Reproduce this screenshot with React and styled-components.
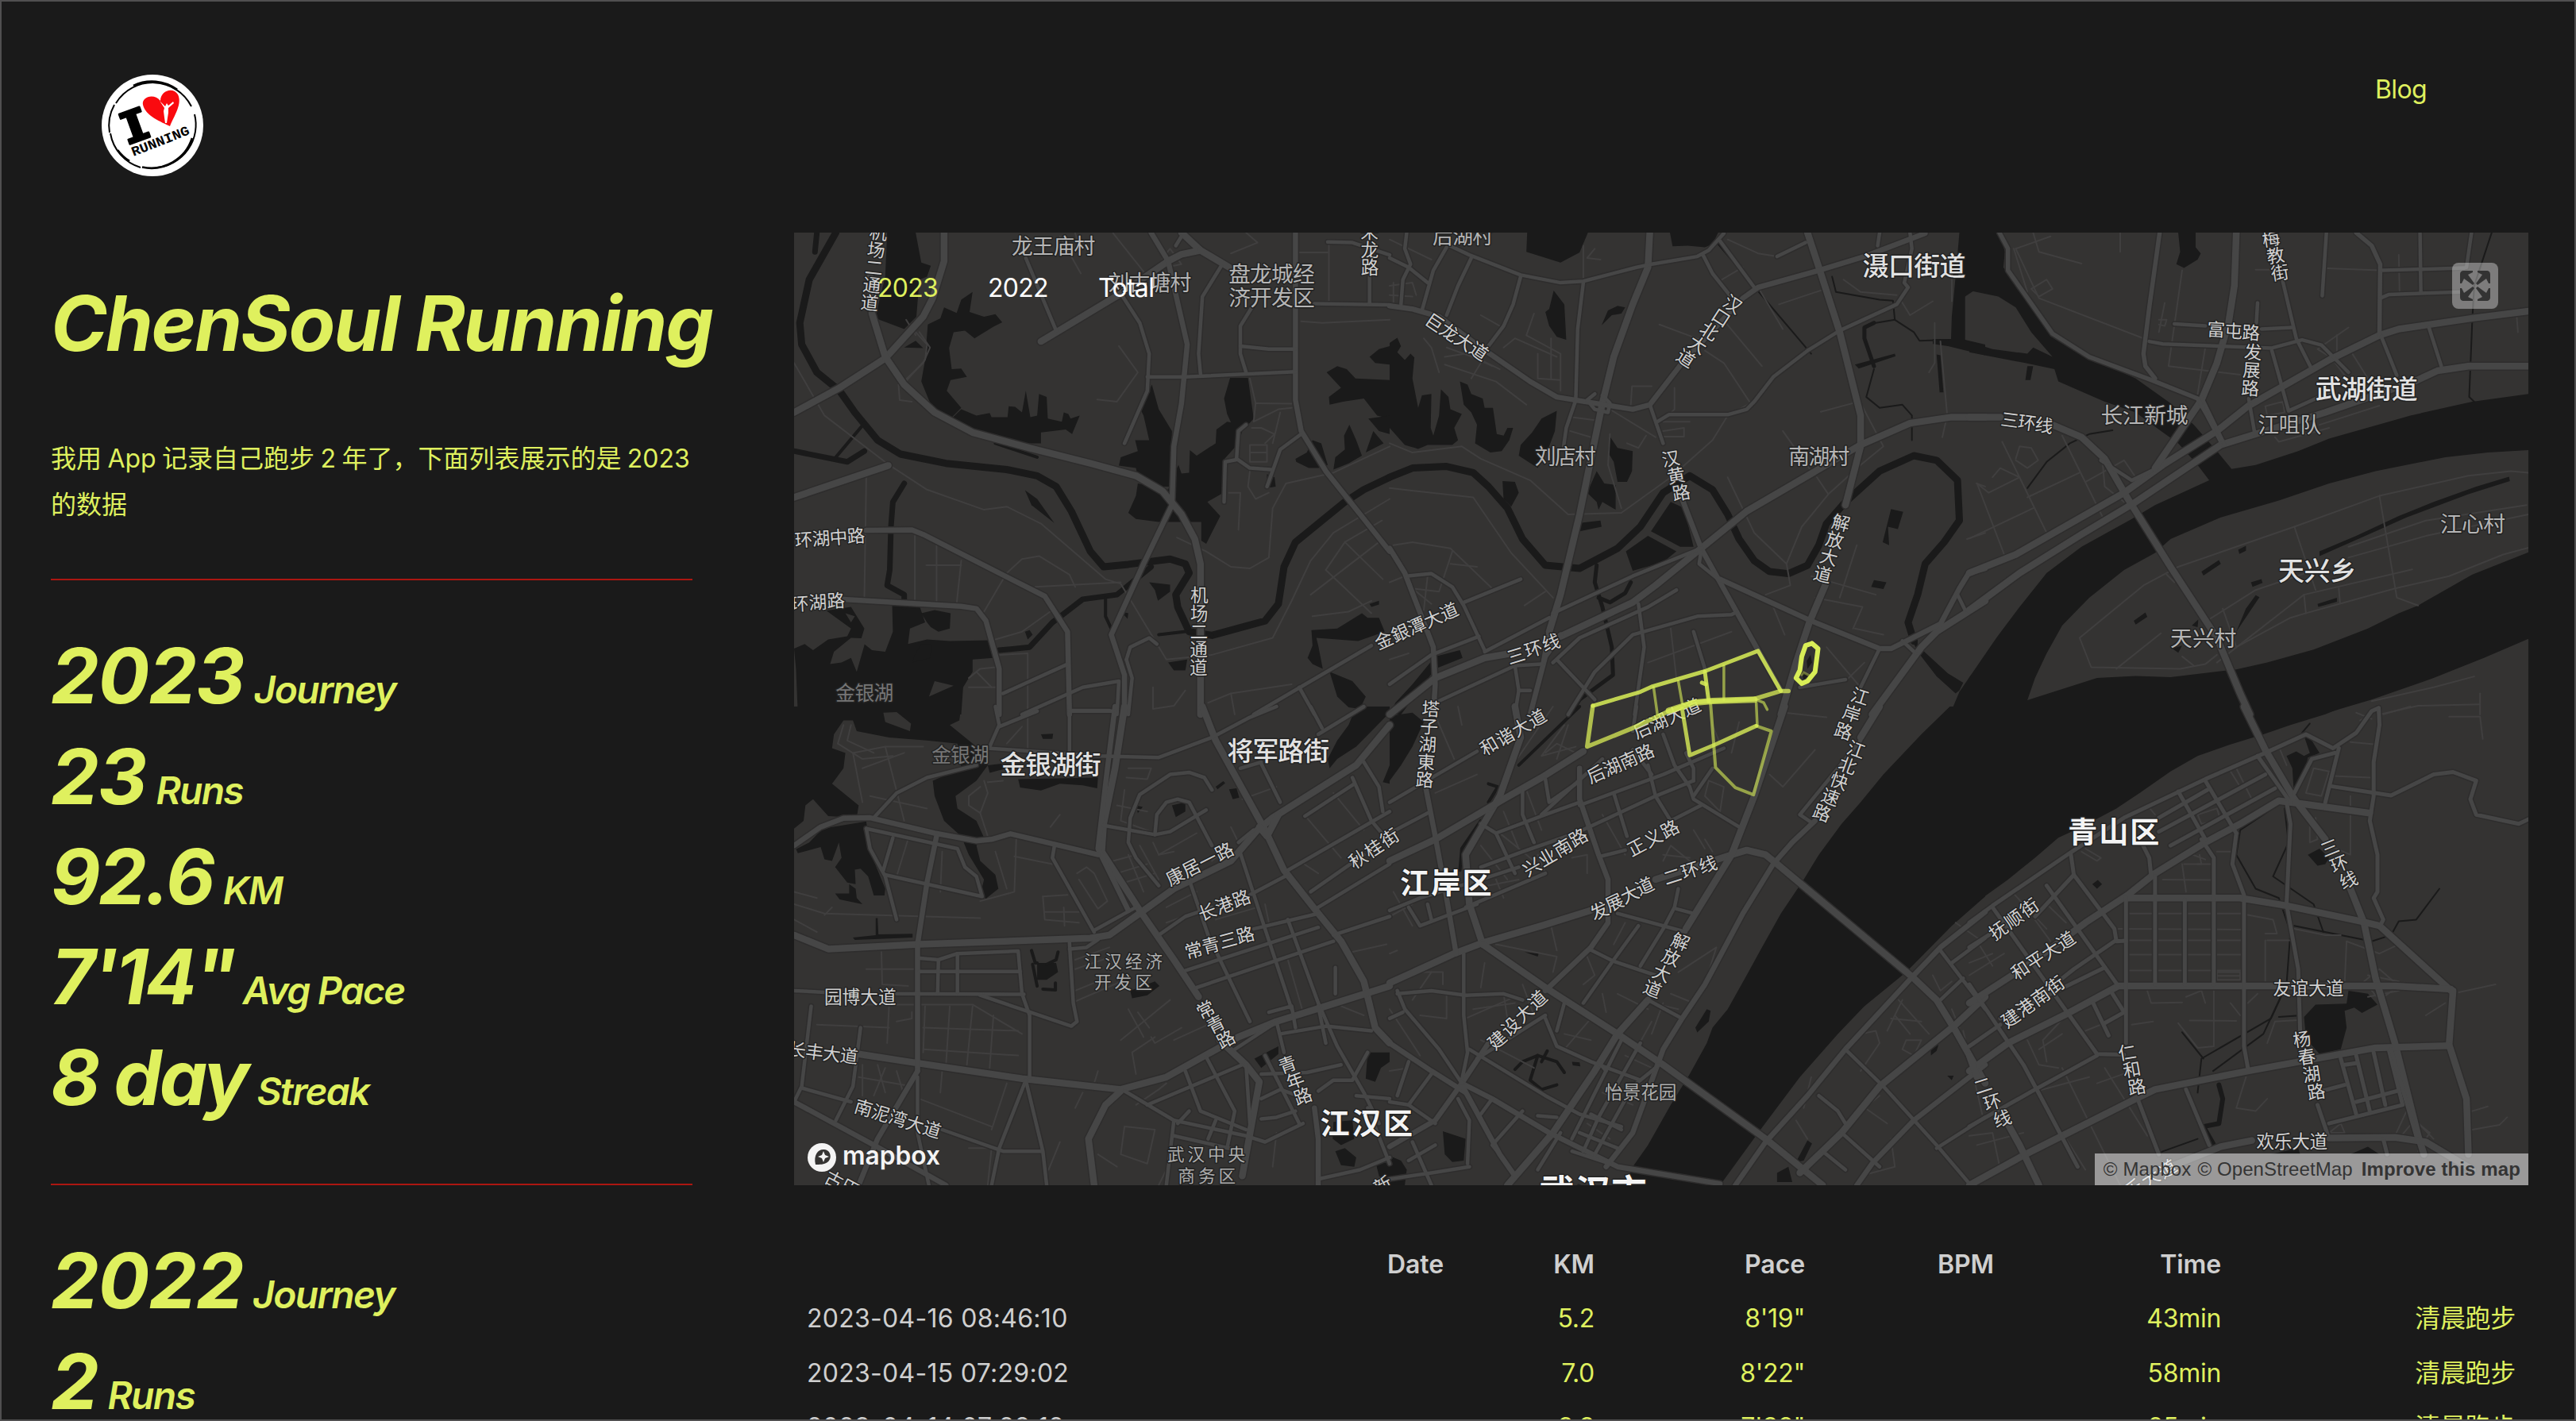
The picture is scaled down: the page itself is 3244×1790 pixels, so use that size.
import React from "react";
import styled, { createGlobalStyle } from "styled-components";

const lime = "#dff05e";
const ink = "#1a1a1a";
const sans = `Inter, "Noto Sans CJK SC", sans-serif`;

const Global = createGlobalStyle`
  * { box-sizing: border-box; }
  body { margin: 0; background: ${ink}; }
`;

const Window = styled.div`
  width: 3244px;
  height: 1790px;
  overflow: hidden;
  border: 2px solid #504f50;
  background: ${ink};
  color: ${lime};
  font-family: ${sans};
  font-size: 32px;
`;

const Header = styled.header`
  display: flex;
  justify-content: space-between;
  align-items: flex-start;
  height: 291px;
  padding: 92px 186px 0 126px;
`;

const BlogLink = styled.a`
  margin-top: -1px;
  line-height: 40px;
  letter-spacing: -0.6px;
  color: ${lime};
`;

const Main = styled.main`
  display: grid;
  grid-template-columns: 936px 2184px;
  padding-left: 62px;
`;

const Sidebar = styled.aside`
  width: 808px;
  padding-top: 66px;
`;

const Title = styled.h1`
  margin: 0 0 94px;
  font-size: 96px;
  line-height: 96px;
  font-weight: 700;
  font-style: italic;
  letter-spacing: -0.0218em;
  white-space: nowrap;
`;

const Intro = styled.p`
  margin: 0;
  line-height: 57.6px;
  word-spacing: -1.6px;
  white-space: nowrap;
`;

const Rule = styled.hr`
  height: 2px;
  margin: ${(p) => p.$top}px 0 57px;
  border: 0;
  background: #ac1611;
`;

const Stat = styled.div`
  display: flex;
  align-items: baseline;
  height: 126.4px;
  line-height: 126.4px;
  font-style: italic;
  white-space: pre;
`;

const StatValue = styled.span`
  font-size: 96px;
  font-weight: 700;
  letter-spacing: ${(p) => p.$tracking}px;
`;

const StatName = styled.span`
  margin-left: 12px;
  font-size: 48px;
  font-weight: 600;
  letter-spacing: -0.036em;
`;

const Content = styled.section`
  display: flex;
  flex-direction: column;
`;

const MapFrame = styled.div`
  position: relative;
  width: 2184px;
  height: 1200px;
  overflow: hidden;
  background: #343332;

  > svg { display: block; }
`;

const YearNav = styled.nav`
  position: absolute;
  left: 105px;
  top: 50px;
  display: flex;
  gap: 62px;
  line-height: 40px;
  letter-spacing: -0.7px;
`;

const Year = styled.a`
  width: 77px;
  color: ${(p) => (p.$active ? lime : "#fff")};
`;

const FullscreenButton = styled.button`
  position: absolute;
  right: 38px;
  top: 38px;
  display: grid;
  place-items: center;
  width: 58px;
  height: 58px;
  padding: 0;
  border: 0;
  border-radius: 8px;
  background: rgba(255, 255, 255, 0.36);
`;

const MapboxLogo = styled.div`
  position: absolute;
  left: 17px;
  bottom: 13px;
  display: flex;
`;

const Attribution = styled.div`
  position: absolute;
  right: 0;
  bottom: 0;
  display: flex;
  gap: 8px;
  height: 40px;
  padding: 0 10px 0 11px;
  background: rgba(255, 255, 255, 0.5);
  color: #343434;
  font: 24px/40px "Liberation Sans", Arial, sans-serif;
  letter-spacing: 0.1px;
  white-space: nowrap;

  b { margin-left: 3px; }
`;

const Table = styled.div`
  padding-top: 66px;
`;

const Row = styled.div`
  display: grid;
  grid-template-columns: 834px 190px 265px 238px 286px 371px;
  height: 68.3px;
  line-height: 68.3px;
`;

const Cell = styled.span`
  padding: 0 16px;
  text-align: ${(p) => (p.$left ? "left" : "right")};
  color: ${(p) => (p.$muted ? "#cfcfcf" : lime)};
  font-weight: ${(p) => (p.$head ? 600 : 400)};
  letter-spacing: ${(p) => (p.$left ? 0.28 : p.$head ? -0.1 : -0.3)}px;
`;

/* ---------- map ---------- */

// Each sheet covers one sixth of the map and has its own 1568-unit grid.
const sheets = {
  A: { x: 1000, y: 290, sx: 0.47832, sy: 0.38903 },
  B: { x: 1750, y: 290, sx: 0.47832, sy: 0.38903 },
  C: { x: 2480, y: 290, sx: 0.48724, sy: 0.38903 },
  D: { x: 1000, y: 890, sx: 0.47832, sy: 0.38903 },
  E: { x: 1750, y: 890, sx: 0.47832, sy: 0.38903 },
  F: { x: 2480, y: 890, sx: 0.48724, sy: 0.38903 },
};

const place = (sheet, x, y) => {
  const s = sheets[sheet];
  return [s.x + x * s.sx, s.y + y * s.sy];
};

const project = (sheet, line) =>
  line
    .trim()
    .split(" ")
    .map((p) => {
      const [x, y] = p.split(",").map(Number);
      return place(sheet, x, y).map((n) => n.toFixed(1)).join(",");
    })
    .join(" ");

const lines = (text) => text.split("|").map((l) => l.trim()).filter(Boolean);

const water = {
  A: `245,8 320,8 335,105 360,115 350,150 330,160 322,280 290,320 215,285 222,240 240,150
|395,250 428,268 440,225 470,200 462,265 500,280 530,272 548,298 525,312 475,350 450,325 420,330 408,382 415,450 440,448 455,475 412,485 402,520 440,575 412,610 360,565 345,520 335,490 345,420 352,305 385,285
|440,580 480,600 515,592 520,605 562,605 565,570 582,572 600,590 610,520 622,605 640,600 645,530 665,540 668,610 705,620 710,590 722,595 728,610 752,600 732,660 715,645 650,655 650,690 560,690 415,610
|290,380 320,358 340,382
|942,500 960,580 995,650 990,830 960,830 905,800 900,770 855,762 860,735 905,715 898,680 935,680 920,600 912,580
|905,820 985,840 1000,790 1012,760 1020,788 1040,785 1042,712 1060,730 1110,690 1112,645 1140,620 1150,622 1140,595 1132,545 1148,478 1195,478 1210,610 1180,650 1170,690 1130,745 1130,850 1088,880 1122,925 1085,1015 1072,1005 1072,945 960,945 900,935 880,915 900,860
|1568,375 1540,385 1515,410 1530,430 1568,435
|1402,460 1430,440 1455,450 1478,480 1568,485 1568,610 1535,600 1500,545 1445,555 1410,565 1408,540 1440,510
|1512,610 1568,600 1568,660 1540,650
|1462,630 1480,680 1495,730 1460,755 1420,775 1425,735 1450,710 1448,665
|1320,740 1350,720 1365,680 1388,690 1405,760 1380,770 1355,770 1322,750
|1525,650 1552,690 1505,720
|0,1355 28,1340 50,1360 90,1325 140,1315 150,1290 85,1232 150,1220 185,1290 175,1330 205,1360 240,1365 260,1300 258,1200 330,1215 345,1270 305,1290 300,1340 350,1325 410,1330 518,1328 525,1385 470,1390 470,1430 445,1480 440,1568 10,1568 5,1420
|335,1240 370,1230 412,1240 410,1290 380,1300 360,1285 350,1270
|335,1340 362,1340 358,1385 310,1400 320,1370
|935,1140 990,1148 990,1170 958,1200 950,1165
|985,1400 1035,1390 1030,1425 1000,1425
|1362,1295 1430,1290 1495,1240 1510,1255 1540,1255 1555,1300 1485,1330 1375,1320 1380,1345 1392,1420 1365,1405 1352,1385 1365,1345
|1410,1430 1470,1460 1505,1510 1490,1550 1460,1545 1430,1510
|608,842 640,870 685,948 625,890
|1245,790 1265,800 1268,830 1245,835
|608,1300 620,1295 628,1310 615,1325
|1515,1210 1540,1200 1540,1212 1520,1220
|860,1235 880,1240 878,1258`,
  B: `362,8 522,8 500,72 450,105 360,70
|738,8 865,8 850,45 830,55 785,50 745,52
|432,195 460,240 465,355 440,345 420,310 410,265 420,255
|558,308 575,260 600,245 620,250 610,270 585,275
|0,365 20,348 30,375 20,395 40,420 55,400 65,412 60,480 75,575 85,535 110,530 108,640 115,665 130,600 135,515 155,540 160,580 190,595 170,640 180,680 165,695 100,695 75,708 40,695 0,640
|185,490 205,500 215,530 245,545 250,575 272,575 282,660 300,665 310,640 325,640 315,680 295,715 265,720 225,690 230,630 215,590 195,565
|440,585 435,650 420,700 390,770 340,730 345,695 375,655 400,610
|580,668 600,705 640,715 638,780 625,815 600,815 590,750 575,720
|545,780 565,820 595,825 595,905 560,880 550,905 545,880 520,850
|297,812 330,815 340,850 320,895 300,870
|500,948 555,940 558,960 500,975
|740,880 775,900 800,1025 765,1025 688,975
|680,990 755,1040 720,1075 640,1103 622,1040
|1320,903 1352,912 1338,968 1312,960 1315,1020 1298,1010
|1275,1133 1308,1140 1300,1162 1268,1155
|0,1568 15,1530 60,1470 120,1380 185,1360 192,1385 120,1420 30,1568
|1500,8 1568,8 1568,200 1545,190 1515,215 1515,355 1568,370 1568,405 1470,375 1430,368 1430,352 1478,352 1480,280 1490,150
|1440,402 1450,405 1458,525 1448,525
|1225,435 1330,400 1332,408 1235,448
|1370,1320 1390,1325 1390,1345 1470,1435 1510,1465 1500,1490 1490,1500 1440,1445 1400,1380
|1475,1568 1500,1495 1526,1448 1568,1390 1568,1568
|1108,1375 1112,1400 1100,1420 1098,1395
|1085,1430 1105,1440 1090,1455`,
  C: `0,8 78,8 92,70 88,120 150,230 215,340 300,405 430,480 520,560 580,630 640,715 678,773 740,760 850,715 930,675 1140,600 1300,555 1445,530 1445,712 1340,720 1230,735 1050,780 930,820 800,875 650,930 520,1000 480,1045 400,1100 310,1190 240,1280 200,1370 170,1450 150,1522 330,1450 430,1443 520,1447 690,1422 770,1400 890,1358 1030,1290 1110,1240 1160,1215 1300,1115 1445,1043 1445,1323 1330,1385 1200,1450 1040,1520 910,1568 0,1568 0,1448 70,1320 130,1220 200,1110 290,1025 420,935 480,890 620,810 590,760 540,690 490,645 430,590 350,555 230,490 220,450 145,430 0,395 0,362 60,385 150,400 165,380 215,410 160,330 120,250 75,215 0,195
|540,8 585,8 585,55 598,75 590,95 555,122 535,110 545,70
|905,1040 1000,990 1110,925 1200,880 1310,830 1395,798 1397,812 1290,855 1130,930 1050,975 905,1055
|600,1105 645,1068 650,1080 605,1118
|695,1035 715,1022 715,1038 698,1048
|728,1140 755,1130 758,1142 732,1155
|740,1182 750,1188 690,1300 715,1225
|425,1265 455,1238 460,1252 430,1277
|900,1210 950,1190 950,1203 902,1220
|525,1355 550,1345 540,1368
|575,1280 592,1260 590,1285
|150,440 145,485 158,485 165,440`,
  D: `0,0 440,0 435,45 410,60 480,130 500,125 510,190 480,240 425,290 430,330 480,370 500,425 480,450 490,500 530,545 538,590 505,622 490,610 500,560 460,480 440,420 395,370 370,290 365,240 440,200 430,120 350,110 250,100 165,80 155,45 130,45 105,90 100,135 135,150 130,200 100,250 170,320 165,360 90,355 50,300 30,320 25,370 0,395
|75,395 190,372 200,470 240,590 238,612 210,612 195,550 175,525 160,528 162,575 140,570 108,520 125,490 118,440 100,500 80,495 70,455 10,475 5,462 40,440
|145,575 162,590 165,620 180,640 120,625 108,605 145,605
|155,748 215,740 215,685 220,685 222,738 312,736 312,748 160,756
|590,235 800,230 798,265 760,255 700,250 650,272 595,262
|510,190 545,185 560,200 515,215
|650,90 682,88 680,105 655,105
|995,320 1030,310 1030,340 1005,358
|900,320 918,325 905,345
|1110,260 1130,242 1135,248 1115,268
|1145,268 1165,265 1172,295 1155,300
|640,830 690,830 695,860 665,885 640,885
|885,920 950,890 962,905 930,935 890,945
|1212,1140 1275,1100 1275,1125 1230,1170
|1480,0 1568,0 1568,20 1480,130 1430,170 1410,200 1405,170 1430,110 1460,60
|1568,190 1550,245 1568,250
|1510,1120 1568,1120 1568,1150 1545,1170 1530,1215 1505,1205
|1425,1440 1450,1430 1480,1460 1475,1490 1440,1485
|1530,1470 1568,1480 1568,1550 1540,1520
|1420,1345 1470,1340 1475,1400 1440,1420 1418,1400`,
  E: `1475,0 1568,0 1568,615 1480,710 1360,860 1250,970 1180,1060 1080,1200 970,1380 870,1550 620,1550 640,1490 680,1420 740,1290 790,1190 835,1090 850,1040 890,980 940,870 980,780 1030,670 1090,560 1130,480 1190,380 1240,310 1300,220 1400,90
|0,30 60,20 90,50 60,130 30,190 0,240
|835,980 845,985 840,1020 810,1055 805,1040
|140,1375 200,1400 195,1470 165,1475 145,1450
|0,1455 30,1470 45,1500 40,1550 0,1550
|1100,1405 1112,1415 1090,1470 1070,1475
|1020,1510 1050,1490 1060,1540 1020,1540
|1425,1110 1445,1095 1440,1115 1425,1130
|480,1150 500,1152 502,1165 482,1162
|355,795 392,800 390,810
|1468,1195 1485,1195 1480,1210`,
  F: `0,0 970,0 920,25 830,60 760,90 670,125 590,160 520,210 440,280 380,330 290,390 230,425 170,490 100,560 0,650
|865,95 885,110 905,150 875,165 870,200 838,262 835,200 820,160 845,145 865,160 880,150
|875,480 905,460 930,490 920,510 900,515
|318,575 332,562 343,575 330,590
|980,920 1030,930 1055,965 1015,992 995,975 970,985 975,1040 960,1110 905,1125 870,1075 865,1005 895,965 975,962
|985,1450 1030,1425 1060,1450
|780,1450 850,1430 855,1450`,
};

const islands = {
  A: `105,1365 150,1320 190,1322 165,1430 150,1385 125,1400 95,1405|370,1460 420,1475 355,1510|135,1240 160,1250 150,1270`,
  D: `235,20 270,18 308,55 305,80 240,50`,
};

// [sheet, stroke width, lines]
const streams = [
  ["A", 9, `110,8 40,160 15,300 20,370 60,460 120,520 160,590 220,680 280,725 400,755 560,775 640,795 690,830 730,910 780,1040 815,1090 880,1082 990,1065 1030,1080 1040,1110 1005,1180 1010,1220 1040,1300 1100,1312 1240,1265 1275,1210 1290,1090 1320,1010 1450,880 1500,840 1568,800`],
  ["A", 7, `290,820 260,880 255,960 252,1100 245,1150 290,1180 290,1220|0,715 140,750 185,715|540,1360 620,1350 680,1270 760,1195 850,1180 940,1090|60,8 55,70`],
  ["A", 4, `185,625 110,735|960,1310 1040,1298|530,690 640,735|820,1190 820,1250 835,1290|1040,1300 1100,1312`],
  ["B", 9, `0,800 60,770 150,765 220,785 260,830 310,900 350,1000 410,1085 500,1095 600,1030 660,960 720,850 790,795 850,840 890,920 920,1000 960,1070 1000,1105 1050,1112 1100,1085 1130,1020 1150,950 1200,880 1290,780 1380,730 1440,745 1495,810 1500,940 1460,1010 1410,1080 1390,1180 1365,1270 1380,1330`],
  ["B", 2, `865,45 1110,400|1165,150 1175,200 1290,225 1325,228 1330,290 1380,330 1395,358 1470,355|1275,450 1255,540 1290,575 1350,565 1375,600 1375,680|1280,300 1330,290`],
  ["B", 5, `1275,300 1250,315 1250,350 1275,440|545,1085 540,1140 560,1220 585,1350 588,1440 500,1520 475,1568|550,1190 580,1205 620,1175 635,1140`],
  ["C", 2, `1350,8 1305,180 1300,290 1292,540 1305,555|150,835 200,750 260,690 310,660 370,648`],
  ["D", 4, `625,790 635,830 640,830|695,795 690,820 665,835|628,835 640,905|655,915 688,918 688,895`],
  ["E", 4, `330,1175 350,1150 390,1130 440,1150 460,1185|390,1130 370,1210 400,1240 440,1225|415,1115 400,1150|500,0 340,190|240,370 190,460 185,530|260,250 285,260 260,310`],
  ["F", 2, `820,300 700,400 690,480 740,590 800,620 830,730 820,900 780,1010 600,1140 590,1250|815,330 825,440 785,550 890,640 915,730|840,710 1040,760 1090,740 1110,695 1155,690 1215,590|860,1000 800,1005|550,1055 605,1140|630,1180 760,1060 820,900|880,55 860,85|590,1400 490,1445`],
  ["F", 6, `645,1225 655,1270 645,1350 605,1360 630,1415`],
];

const streets = {
  A: `0,430 80,600 250,760 350,840 500,905 560,895 650,950 820,1130 860,1145 980,1390 1100,1375 1260,1320 1310,1200 1360,1070 1420,980 1568,870|190,800 185,1190|318,990 318,1200|375,1010 375,1210|440,1070 428,1210|348,1085 440,1085|500,1235 560,1110 600,1065 645,1055 725,1115 740,1155|635,1155 860,1140|855,375 905,460 850,555 798,548|1335,295 1390,300 1568,290|1408,30 1408,230|1330,72 1405,72|1085,1040 1150,1090 1200,1095 1250,1060 1260,900 1295,820 1420,785 1568,700|1365,1250 1460,1235 1520,1200|1400,1100 1450,1010 1550,1130|1400,1100 1520,1240|1450,1010 1548,940|540,1375 615,1370 615,1568|530,1325 600,1300 680,1230|1008,995 1085,1040|1215,560 1310,562|1200,480 1215,560 1210,620 1275,580 1310,575|1200,695 1245,695 1245,750 1200,750 1200,695|1200,720 1245,720|1280,590 1270,640 1260,690|320,330 350,370 345,420 290,495|330,330 358,380 340,430 280,500|295,290 320,340|275,500 278,550 310,555|945,1480 945,1550 1000,1540 1030,1490|1090,1530 1150,1500 1310,1470|1150,1500 1160,1568|460,1450 490,1420 530,1415|460,1480 540,1480|480,1430 520,1480|700,20 755,140|740,10 750,50|1150,75 1220,40 1190,8|1205,640 1230,640 1265,660 1240,690|1145,850 1175,850 1170,970|1200,780 1195,830 1215,870 1250,850|1360,1180 1540,1010|840,10 950,180|970,90 990,60 1020,110 980,120 970,90`,
  B: `0,690 60,720 190,700 240,740 370,810 470,920 610,915 740,800 850,680 890,600 950,560 880,430 830,390|0,835 220,865 320,1045 430,1190|10,1020 60,1010 160,1030 270,1160|890,800 960,980 1045,1080 1055,1150 990,1180|1230,1020 1185,1190|1125,800 1155,855 1240,760 1300,700 1240,560|710,305 830,360|885,300 980,440|970,185 1035,320|1025,240 1135,195|635,565 638,505 690,505|750,510 750,580 720,615|360,340 450,400 450,520|380,270 360,340|145,435 280,490 360,565|130,460 110,380 90,350|390,400 390,480 450,485|1155,855 1085,960 1045,1080|1110,1120 1280,1180|1120,1190 1245,1220 1220,1290|1225,1290 1300,1310|740,1290 755,1450|680,1400 900,1300|1010,1220 1040,1310|1435,300 1435,430 1420,460|1450,360 1468,600 1455,670|1195,160 1240,200 1335,210|1035,650 1110,780|355,1215 410,1170|510,50 510,165|480,605 540,615|475,650 530,670|580,580 700,670|145,410 200,400 270,440|150,380 240,420 290,450|215,480 240,430|0,180 60,170 70,210|0,210 60,215|10,170 10,240|300,380 330,350 440,410|425,350 425,480|240,275 290,310|890,30 970,75 1020,85|875,160 930,120|720,650 775,640 775,668 720,668|720,620 790,620|580,660 575,760 610,900|625,690 655,705 675,665|1135,588 1220,560|0,30 110,95|540,60 520,90 555,95|1345,225 1370,275 1430,230|1480,160 1480,230|110,1210 60,1160 130,1170 165,1040|100,1120 90,1230|160,1080 230,1090|0,1140 40,1120|0,1390 50,1370|1545,820 1568,830|1520,1000 1568,980|1150,1350 1240,1480|1250,1400 1200,1460`,
  C: `120,60 180,220 450,350|165,8 180,70 290,108|390,8 390,70|550,130 515,440 700,468|505,235 490,330|610,380 590,530|740,128 780,128|925,123 1060,130|1110,80 1112,200|980,315 900,385 960,430|905,630 1060,568|85,685 200,980|20,820 90,1050|0,998 165,900|240,665 345,930|150,865 285,785|540,1090 840,960 1060,860 1290,795 1400,780 1445,785|1060,860 1105,1190 1160,1215|840,960 895,1165|980,1060 1180,990 1445,920|980,1025 1180,940 1440,890|870,1240 1100,1160 1240,1120 1380,1050 1445,1028|620,1260 740,1165 870,1110|540,1090 450,1150 285,1320 315,1415 545,1420 610,1405 640,1375|380,1420 495,1305|640,1400 865,1180 1145,1098|655,1225 690,1350 830,1255 870,1240|865,1180 870,1240|955,1160 958,1205|1320,1500 1320,1568|1060,1568 1160,1540 1320,1535|1040,1525 1200,1480 1305,1445|120,740 130,700 160,705 178,745 150,770 120,745|60,800 80,770 130,800 50,850 20,820|160,190 200,160 215,190 180,215 160,190|120,60 210,20|940,420 1000,520|990,400 1030,480|950,340 950,400|765,570 810,555 815,590 770,600 765,570|345,760 350,830 400,880 440,870|300,815 400,745 430,800|1415,280 1418,330|115,60 150,200|490,290 510,290 505,310 490,305|790,670 800,685 930,640|550,1380 580,1410|510,1115 530,1140`,
  D: `0,640 80,670 490,685|0,600 60,620|80,675 100,650|585,430 580,600 490,630|580,485 680,510|655,615 720,610|655,615 660,690 750,700|190,850 325,850|230,795 232,900 300,905|325,965 470,965 600,1060|175,965 325,965|60,1030 250,1040|340,1040 590,1050|410,970 400,1160|470,970 455,1160|525,1000 515,1170|250,970 245,1090|340,1110 590,1130|155,150 240,130 340,130|155,150 180,310|180,200 290,150|240,130 290,370|200,290 350,330|130,60 115,120 180,170 260,160|150,60 140,110 210,150|500,240 510,280 490,345 460,320 460,290 490,260|550,240 510,245|490,345 510,420|660,665 750,665|710,650 712,710|745,540 770,520 790,540 825,630 800,655 750,560|1000,470 960,480 945,440|740,820 830,780|740,850 860,800|740,955 880,880|740,920 820,880|860,1080 990,950|900,1190 890,1120 950,1070|1000,1080 1090,1030|870,1360 950,1370 930,1480 860,1450 870,1360|800,1450 850,1490|390,1180 385,1250|180,1160 180,1260|220,1160 240,1250|170,1200 310,1230|330,1270 520,1360|1000,1450 960,1550|700,1410 670,1500|1260,1490 1270,1380|870,270 860,370 950,410|850,320 930,340|880,200 940,200 930,235 875,230|1300,820 1340,990|1450,800 1560,770|1440,970 1500,1000|615,0 615,140|560,120 600,65|675,390 700,350|530,470 560,590|390,470 385,600|300,430 270,550|960,480 1060,410|840,500 900,480|850,540 930,510|870,570 950,540|880,480 920,600|910,450 960,560|1180,300 1270,260|1350,360 1440,490|1420,280 1500,400|1240,640 1250,700|1150,390 1170,440|1110,690 1220,650|980,650 1060,600|980,700 1070,660|1100,500 1140,460|1330,500 1380,540|880,980 920,1070|905,990 935,1040|940,1070 950,1090 1020,1040|345,970 340,1120|560,1220 520,1370|270,1180 290,1260|240,1170 210,1260|460,1430 520,1430 510,1550|0,690 60,730|760,1250 740,1300|900,1290 960,1240 980,1220|800,1180 790,1220|270,1020 310,1010 310,990`,
  E: `110,0 170,170|120,280 230,220|460,60 400,160 490,130|760,860 860,780 830,900|690,1020 640,1130|1000,220 1035,260 1120,140|1040,20 1150,35|280,770 440,810 430,860|425,710 440,790|520,810 540,870 510,900|250,830 240,910|110,860 60,950|150,930 150,1010 80,1000|220,980 330,960|460,1060 530,1080|840,240 880,260 870,340 830,290 840,240|720,480 790,490|830,430 850,470|1340,950 1420,1060|1240,1060 1280,1050 1290,1090 1240,1180|1290,1260 1200,1350|1360,1080 1400,1080 1380,1130 1350,1110 1360,1080|1510,1050 1560,1320|1240,1290 1310,1350|560,930 570,990|590,770 620,700|430,0 330,180|410,150 440,120 490,150|470,60 440,170|560,350 620,480|300,340 340,460|360,270 400,400|180,0 190,60|720,500 740,450 790,500|800,400 830,460|240,450 310,560|280,400 380,500|260,580 340,560|280,560 300,620|0,680 60,640|10,600 60,710|480,490 520,480 520,540|390,480 410,540|0,800 20,790|0,1180 50,1170|80,860 140,860 140,900|200,1010 330,940|300,930 310,1010|350,900 380,1000|0,980 80,1130|470,960 530,1010 460,1110|600,930 680,980|690,960 760,980|620,1130 690,1170|600,1190 680,1230|560,1250 640,1290|520,1350 580,1400|740,930 800,960|720,960 690,1060|1330,1000 1370,1060|1350,950 1310,1050|1320,1010 1400,1020|1430,870 1450,920 1480,890|1480,980 1500,1040 1450,1060|1110,1200 1090,1300|1070,1340 1100,1400|1320,1400 1330,1490 1240,1520|1490,700 1560,760|640,60 720,20|850,60 870,120|920,50 900,150|240,1080 380,1170`,
  F: `415,670 710,670|385,720 710,722|405,757 710,757|415,803 710,803|415,855 710,855|765,757 765,890|720,675 785,690 795,735 765,735|770,757 830,757|985,290 985,480 930,450|890,200 930,210 910,290 870,280 890,200|940,225 1035,230|985,115 1045,122|1070,25 1140,0|1240,33 1320,33 1327,105|1265,925 1360,900|1180,1000 1230,960|460,920 470,960 550,958|632,920 632,1100 590,1105 540,1025|570,1017 690,1018|675,960 700,1000|715,1200 690,1300 740,1310 770,1270|1300,1370 1370,1355 1390,1330|1300,1310 1340,1295|770,1090 790,1020 850,1015|975,760 1060,800 1110,770|970,900 975,760|0,830 60,800|110,600 200,720|1020,890 1060,850 1110,905 1060,950 1020,890|1030,870 1110,890 1110,920 1030,940|1100,1390 1130,1310 1200,1400|1110,1400 1150,1340 1190,1380 1160,1440|610,495 555,470|590,510 600,510 595,480|150,1080 180,1160 230,1170|250,1000 190,1080 200,1150|0,1390 60,1380 80,1500|350,1170 460,1390|240,1170 390,1550|640,470 680,470|555,510 630,510|500,560 630,562|640,860 700,860 700,885 640,885 640,860|640,872 700,872|300,460 340,490 330,500 290,470|880,380 895,360 900,430 880,440 880,380|590,350 640,330 650,370 600,380 590,350|460,320 480,350|670,200 700,260|690,200 730,300|550,510 560,600|140,640 210,760|200,640 250,700|20,760 60,840|0,870 90,800|840,720 920,740 960,740|560,940 600,920 610,960|720,960 745,930|800,130 820,190|1000,20 1040,40|1010,45 1050,15|300,1050 400,1000|160,1250 310,1200|330,1220 420,1180|240,1380 300,1500|20,1420 140,1380|960,1350 930,1380 970,1380 960,1350|420,1030 475,1020|180,1110 240,1060`,
};

const roads = [
  ["A", 9, `0,590 120,510 240,415 340,280 365,220 395,100 395,8|200,150 205,270 240,410 290,500 370,590 470,655 620,705 780,755 900,795 970,845 1020,920 1055,1000 1070,1080 1070,1568|0,865 248,762|650,360 860,205 985,100 1020,78 1070,65 1020,8|1070,65 1145,120`],
  ["A", 7, `940,8 985,100 1035,370 1020,560 1000,700 995,890 920,1080 835,1310 870,1440 870,1568|1320,8 1320,550 1335,650 1400,780 1568,1040|190,972 310,970 340,985 660,1185 720,1300 725,1568|130,1195 440,1218 480,1225 505,1265 540,1420 540,1568`],
  ["A", 5, `610,90 690,325|860,205 910,300 935,400 930,520 870,690|930,475 1030,475 1320,458|1125,115 1075,215 1065,400 1070,465|1205,250 1175,310 1175,400 1190,460|1175,375 1250,385 1320,385|1370,238 1568,242|1515,150 1515,235|1335,660 1280,710 1245,830|1255,775 1200,770 1165,740 1170,650 1190,630|1165,743 1135,750 1132,880|1210,1568 1520,1345|550,1500 720,1405|600,1568 760,1480 855,1460 850,1568|725,1555 830,1555|1330,1480 1370,1568|875,1390 885,1350 935,1320 955,1340|875,1390 890,1450 880,1568|1405,38 1470,40 1568,80|1005,50 1020,20`],
  ["B", 9, `685,8 680,120 640,240 590,410 560,560 540,680 500,920 450,1180 420,1300|1100,8 1130,120 1185,330 1240,600 1240,700 1200,890|1150,1140 1105,1270 1070,1400 1030,1568|1568,605 1480,605 1370,625 1240,695 940,910 820,1030 700,1150 640,1205 450,1315|0,1568 120,1450 250,1385 320,1370|1568,1200 1440,1300 1400,1350 1270,1568`],
  ["B", 7, `0,245 60,255 130,280 240,380 370,490 440,540 540,560 640,580 685,565 770,430 930,220 970,185 1130,130 1250,85 1410,10|450,1310 410,1380 370,1568|770,870 820,1030 870,1140 970,1360 1030,1490|870,1130 1110,1265 1290,1355 1320,1355 1450,1275 1500,1160 1525,1110 1568,1095|0,1030 40,1110 115,1350 120,1470 115,1568|420,1300 405,1400`],
  ["B", 5, `685,565 720,690|150,45 210,80 345,145 450,170 510,165 650,120 690,110 810,85 840,65 880,10|150,55 115,130 85,260|45,8 40,60 55,110 35,160 30,240|215,90 180,180 150,275|0,90 50,120 100,170|345,150 325,240 300,310 260,375|510,170 495,320 490,550 465,640 458,700|825,80 850,140 895,210|870,35 960,185|1020,85 1095,40|1370,8 1375,60 1355,170 1365,185 1335,240 1185,325 1100,390 1010,475 960,555 940,580 890,597 735,597 705,620|820,1040 815,1080 870,1135|820,1030 640,1120 430,1240|45,1120 110,1112 165,1155 195,1215 250,1360|345,1130 195,1205|655,1210 670,1350 645,1568|755,1165 680,1220 500,1320 430,1400|250,1365 420,1255|0,1470 110,1375 235,1315|120,1530 330,1410 400,1405|330,1410 340,1490 330,1568|470,1568 540,1430 640,1310 810,1250 900,1245 915,1235|800,1300 830,1420|1080,1480 1200,1455|1240,1480 1290,1355|1495,1180 1515,1230|1350,1330 1385,1370|440,1390 540,1520|340,1490 370,1490|540,530 520,550 540,580 575,590 580,560 560,535|1290,8 1285,50`],
  ["C", 9, `0,605 80,605|215,630 290,670 350,740 410,870 520,1090 640,1320 700,1500 725,1568|1445,262 1300,285 1110,320 1060,340 930,420 720,570 640,650 500,760 400,850 120,1050 0,1110|1445,440 1290,440 1210,455 1150,490 920,590 740,660 650,695 430,880 290,985 130,1110 0,1230|690,8 685,180 670,300 640,430 600,550 480,770`],
  ["C", 6, `78,8 100,60 100,130 215,335 310,410 470,485 590,545 615,600 655,695|492,8 465,250 450,400 455,440 480,480|1000,8 1040,50 1062,110 1060,340`],
  ["C", 5, `810,165 845,350 885,450|465,360 500,368 780,382 860,355 910,372 980,460|530,303 610,310|755,320 835,315|745,235 742,300|782,390 800,470 825,585 940,520|923,8 912,212|1165,8 1167,200|1068,130 1280,122|1062,220 1085,208 1270,200|1298,8 1285,120|1065,345 1105,470|1188,315 1220,440|722,545 738,660|600,540 660,695|340,745 420,810 470,780`],
  ["D", 9, `0,740 90,785 330,770 780,750 830,740 915,665 1000,590 1150,500 1220,400 1260,360 1480,190 1568,60|1075,0 1110,110 1240,400 1290,530 1380,670 1440,760 1500,890 1530,1040 1568,1090|870,0 845,200 815,380 810,470 910,660 1000,820 1065,940|170,1125 300,1150 600,1205 860,1240 980,1200 1170,1070 1270,1020 1400,970 1568,905|860,1245 820,1290 775,1400 790,1550|1120,1080 1190,1160 1225,1215 1180,1520|1225,390 1245,420 1275,350`],
  ["D", 7, `845,0 825,200 800,460 880,660|0,450 70,390 130,362 200,360 370,410 480,435 520,430 570,412 700,450 800,480|325,1180 325,770 350,570 375,420|325,1180 220,1400 170,1550|0,1280 210,1420 400,1550|1370,1300 1380,1400 1380,1550`],
  ["D", 5, `210,360 270,280 350,230 480,190|510,135 800,160 960,165 1100,100 1200,35 1270,0|530,0 540,60 515,130|540,65 640,15|725,0 725,150|725,15 840,15|190,395 430,460 450,520 480,550 495,615 240,545|190,395 200,460 240,550 270,690|260,425 235,530|685,455 680,490 790,730|790,725 900,650|815,385 950,415 990,405 1085,335|1100,270 1080,230 1040,213 990,220 910,285 885,360 880,440 900,490 960,580|950,415 955,350 980,310 1010,300 1040,310 1100,450|1175,200 1230,180|1230,185 1280,310|1175,475 1240,720 1310,980|1345,355 1475,250|1470,230 1520,370 1568,440|1300,530 1568,340|1360,600 1500,480|1380,650 1568,510|960,740 1030,680 1100,650|1040,560 1090,740 1200,1020|1200,610 1300,545|1030,855 1380,715|1060,910 1420,760|1210,720 1380,670|1300,690 1380,960 1430,1100 1500,1250 1540,1350|1420,740 1568,680|330,815 380,820 430,800 590,792 600,930 620,1000 620,1200|0,920 80,925|270,930 605,932|330,858 595,858|380,820 378,925|430,800 430,925|725,765 735,960 745,1020 730,1035 490,935|725,785 770,780 800,755|45,970 20,1230 0,1280|175,1040 155,1230 110,1340|20,1235 150,1280|390,1370 550,1440 650,1440|610,1210 540,1430 520,1550|610,1210 655,1440 665,1550|325,1200 325,1380 355,1550|870,1245 1000,1340 1190,1390 1240,1410 1340,1350|930,1290 1180,1160|1030,1180 1070,1310 1190,1370|1085,1135 1160,1310 1140,1430|1000,1340 980,1550|1010,1350 1040,1310|1240,1130 1330,1350|1160,1110 1260,1030|1270,1020 1290,1120|1250,990 1310,970 1320,1040|1380,970 1400,1090|1280,1060 1400,1035 1520,1050|1230,1190 1350,1185 1440,1160|1230,1270 1280,1240 1350,1270|1230,1335 1270,1330 1320,1310|1190,1160 1200,1350|1380,1530 1490,1500 1568,1460|1500,0 1380,90|1360,0 1390,70|1380,1245 1420,1210 1470,1210 1510,1120|1480,1260 1568,1270|1000,1390 1180,1440|1110,1340 1090,1400|1510,1300 1568,1480|1425,845 1425,930|1170,440 1210,400|1500,180 1540,260 1550,340`],
  ["E", 9, `330,0 345,100 290,290 200,480 210,640 245,770|0,500 120,430 300,300 400,230 510,145|0,895 170,800 245,765 400,710 530,660|700,560 900,480 940,465 990,480 1020,510 1380,880 1440,950 1490,1050 1568,1220|245,770 410,910 600,1060 720,1160 990,1400 1140,1550|1040,0 960,290 900,480 780,720|680,950 600,1060 540,1180 430,1380 310,1550|1290,0 1240,100|1568,940 1490,1030 1400,1120 1290,1230 1190,1380 1080,1510`],
  ["E", 7, `1120,370 1060,440 1010,510 930,670 830,900 770,1010 720,1110 640,1380 570,1490|1568,665 1450,780 1380,870 1200,1110 1100,1260 990,1410 910,1550|1568,1160 1380,1340 1270,1480 1230,1550|90,230 120,420 150,620 175,800|0,1425 120,1340 190,1220 260,1090|190,1220 270,1270 420,1380 600,1490 870,1545|0,1090 110,1180 200,1250|190,1225 290,1450 330,1520|410,920 530,780 575,700 575,560 550,480 500,300 500,200`],
  ["E", 5, `0,660 80,620 240,560 340,520|0,310 230,145|0,410 100,345|240,380 280,410 330,540|280,410 410,350 500,310|410,235 420,310 490,250|350,270 350,350 380,440|200,650 410,540|240,520 350,470 490,410 700,290 800,240|590,280 625,420|680,190 700,290 740,370|500,320 720,220 880,135|720,90 750,190 790,260 800,300 920,390|850,200 800,290|780,150 800,200 800,240|640,140 690,220|400,350 560,170|555,485 620,465|740,370 820,320|600,670 780,730|760,590 750,650 720,720 660,840|755,655 800,670|655,710 590,820 510,960|525,785 590,825 700,870|680,950 770,1010|410,1010 440,1100 530,1150 660,1210|460,960 440,1050|195,800 195,1000 205,1120 190,1210|20,930 110,920 200,935 300,930 350,950|20,920 40,980 130,1110 190,1220|230,1140 410,1000|210,1110 410,1260 500,1320 610,1360|550,1150 570,1180|610,1080 480,1400|660,1090 550,1330 510,1440|710,1160 640,1230 540,1450|1240,110 1080,350 1110,375|1200,1110 1300,1230 1440,1420 1530,1550|1450,790 1568,980|1510,880 1450,950|1480,830 1568,750|1190,1380 1290,1490|1440,1430 1568,1330|1130,1260 1180,1310 1200,1350|1140,1440 1200,1500|0,1010 35,990|50,1150 20,1260|110,1190 50,1290 0,1280|50,1290 120,1350|180,1270 210,1340 205,1480|270,1270 240,1320|60,1410 110,1550|0,1530 110,1510 210,1490|350,1310 270,1420 290,1450|50,1470 120,1420|390,1325 440,1330|390,1500 450,1380|530,1320 610,1370|500,1380 600,1430|480,1440 580,1480|50,650 80,710 230,640|100,640 110,690|650,0 640,80`],
  ["F", 9, `710,0 765,140 840,300 920,430|985,590 1020,700 1050,880 1100,1090 1160,1390 1175,1450|0,960 160,830 300,700 410,610 480,540 610,440 700,380 800,305 860,315 1035,345|405,620 700,620 820,645 1010,695 1060,710 1245,920|0,1180 100,1090 260,990 385,905 1100,905 1245,915|1250,920 1240,1095 1285,1270 1290,1450|0,1550 145,1450 430,1270 480,1240 720,1180 1050,1105 1240,1098|500,1500 650,1425 730,1405|930,1397 1100,1395 1180,1410 1300,1500|0,1130 20,1200|90,1330 130,1420 180,1550`],
  ["F", 5.5, `0,700 60,645 265,470 400,360 610,235 765,150 870,90 940,135 1000,85 1040,15 1058,5|1058,5 1060,60 1045,180 1045,290 1035,370 1055,480 1055,600 1045,620 1070,690 1060,715|935,258 1090,288 1200,220 1250,212 1310,240 1295,300 1310,350 1420,380 1445,365|955,135 920,310|840,280 885,170 945,150|745,160 830,310|820,310 830,380 820,640 850,850 855,1050|690,410 680,510 710,610 710,1100 720,1170|405,620 405,1090|480,550 480,900|557,625 557,900|632,625 632,900|600,430 632,490 632,625|540,275 610,430|610,240 690,410|490,360 615,270|520,450 790,265|490,405 765,220|445,440 465,490 470,550|262,475 270,545 375,720 380,760 405,758|200,580 385,905|60,650 230,950 330,1125 400,1127|0,780 100,700|170,680 270,545|0,900 140,1160 200,1300 280,1490|330,1130 170,1240 0,1360|375,760 270,850 200,920|350,845 80,1010|0,1100 80,1030|320,960 360,1065|370,930 400,990 350,1025|435,1270 490,1450|560,1240 620,1420|900,1290 930,1400|930,1350 1120,1290 1085,1115|960,1140 1000,1320|1000,1130 1035,1310|1045,1120 1075,1290|970,1160 1000,1155|1000,1280 1105,1245|910,1245 970,1225|1090,1110 1155,1390|1070,1400 1080,1450`],
];

const runs = [
  [5, 0.85, `535,1540 660,1495 690,1478 830,1428 970,1362 1030,1492`],
  [5.5, 0.75, `535,1540 520,1672 640,1612 730,1560 800,1528 960,1518 1030,1492 1050,1492`],
  [8, 0.75, `735,1556 800,1530 850,1524 960,1520`],
  [3.5, 0.6, `695,1480 705,1568|760,1460 770,1530|880,1410 880,1520|965,1530 968,1605|965,1520 985,1530 994,1552`],
  [5, 0.85, `830,1430 840,1525|822,1465 832,1470`],
  [5, 0.8, `770,1550 790,1700 858,1665 965,1605`],
  [4, 0.6, `965,1605 1005,1622 958,1828 910,1805 858,1740 845,1535`],
  [6, 1, `1112,1338 1128,1355 1120,1430 1100,1460 1085,1468 1070,1450 1080,1425 1085,1380 1095,1345 1112,1338`],
  [3, 0.4, `1085,1440 1090,1432 1110,1445`],
];

const tone = { road: "#d0d0d0", village: "#b5b5b5", area: "#adadad", lake: "#767676", town: "#e2e2e2", city: "#f4f4f4" };
const weight = { road: 400, village: 400, area: 400, lake: 400, town: 500, city: 700 };

// [sheet, text, kind, size, x1, y1, x2, y2, rotation] — centre of first and last glyph
const labels = [
  ["A", "龙王庙村", "village", 26, 601, 52, 765, 52, 0],
  ["A", "刘古塘村", "village", 26, 855, 170, 1018, 170, 0],
  ["A", "盘龙城经", "village", 27, 1173, 140, 1342, 140, 0],
  ["A", "济开发区", "village", 27, 1173, 218, 1342, 218, 0],
  ["A", "来龙路", "road", 22, 1515, 5, 1516, 120, 0],
  ["A", "机场二通道", "road", 22, 222, 8, 199, 235, 6],
  ["A", "环湖中路", "road", 22, 25, 1003, 163, 990, -4],
  ["A", "环湖路", "road", 22, 15, 1210, 110, 1200, -3],
  ["A", "机场二通道", "road", 22, 1067, 1183, 1065, 1415, 0],
  ["A", "金银湖", "lake", 24, 135, 1500, 236, 1500, 0],
  ["B", "金銀潭大道", "road", 22, -15, 1328, 157, 1235, -24],
  ["B", "后湖村", "village", 25, 140, 20, 245, 20, 0],
  ["B", "巨龙大道", "road", 22, 118, 300, 235, 392, 34],
  ["B", "汉口北大道", "road", 22, 903, 240, 780, 415, 33],
  ["B", "滠口街道", "town", 32, 1280, 115, 1482, 115, 0],
  ["B", "汉黄路", "road", 22, 740, 740, 768, 850, -10],
  ["B", "刘店村", "village", 26, 410, 733, 515, 733, 0],
  ["B", "南湖村", "village", 26, 1078, 733, 1183, 733, 0],
  ["B", "解放大道", "road", 22, 1188, 948, 1140, 1115, 14],
  ["B", "三环线", "road", 22, 333, 1378, 425, 1335, -17],
  ["C", "梅教街", "road", 22, 780, 28, 803, 138, -9],
  ["C", "富屯路", "road", 22, 638, 322, 728, 332, 3],
  ["C", "发展路", "road", 22, 733, 395, 726, 512, 3],
  ["C", "长江新城", "village", 27, 368, 600, 537, 600, 0],
  ["C", "三环线", "road", 22, 105, 615, 193, 632, 8],
  ["C", "武湖街道", "town", 32, 928, 515, 1125, 515, 0],
  ["C", "江咀队", "village", 26, 773, 630, 882, 630, 0],
  ["C", "江心村", "village", 27, 1245, 952, 1357, 952, 0],
  ["C", "天兴乡", "town", 32, 832, 1103, 966, 1103, 0],
  ["C", "天兴村", "village", 27, 548, 1322, 662, 1322, 0],
  ["D", "金银湖", "lake", 24, 388, 158, 488, 158, 0],
  ["D", "金银湖街", "town", 32, 577, 187, 774, 187, 0],
  ["D", "将军路街", "town", 32, 1175, 145, 1375, 145, 0],
  ["D", "康居一路", "road", 22, 1003, 550, 1133, 470, -27],
  ["D", "长港路", "road", 22, 1088, 665, 1178, 622, -20],
  ["D", "常青三路", "road", 22, 1052, 790, 1188, 740, -15],
  ["D", "秋桂街", "road", 22, 1485, 495, 1568, 425, -33],
  ["D", "江汉经济", "area", 21, 787, 825, 948, 825, 0],
  ["D", "开发区", "area", 21, 813, 893, 920, 893, 0],
  ["D", "常青路", "road", 22, 1084, 982, 1137, 1078, -27],
  ["D", "青年路", "road", 22, 1299, 1160, 1340, 1262, -20],
  ["D", "园博大道", "road", 22, 103, 940, 245, 940, 0],
  ["D", "长丰大道", "road", 22, 8, 1112, 145, 1132, 7],
  ["D", "南泥湾大道", "road", 22, 183, 1300, 363, 1370, 17],
  ["D", "武汉中央", "area", 21, 1005, 1450, 1165, 1450, 0],
  ["D", "商务区", "area", 21, 1033, 1520, 1140, 1520, 0],
  ["D", "古田", "road", 22, 105, 1533, 148, 1560, 28],
  ["D", "新", "road", 22, 1550, 1550, 1550, 1550, -28],
  ["D", "江汉区", "city", 36, 1424, 1350, 1590, 1350, 0],
  ["E", "塔子湖東路", "road", 22, 108, 8, 92, 238, 3],
  ["E", "江岸路", "road", 22, 1238, -32, 1195, 80, 18],
  ["E", "后湖大道", "road", 22, 665, 75, 795, 3, -24],
  ["E", "和谐大道", "road", 22, 262, 128, 388, 38, -30],
  ["E", "后湖南路", "road", 22, 543, 220, 672, 150, -24],
  ["E", "兴业南路", "road", 22, 375, 520, 497, 425, -30],
  ["E", "正义路", "road", 22, 650, 455, 738, 397, -28],
  ["E", "发展大道", "road", 22, 552, 662, 672, 582, -25],
  ["E", "二环线", "road", 22, 745, 550, 838, 512, -18],
  ["E", "江岸区", "city", 36, 66, 573, 230, 573, 0],
  ["E", "江北快速路", "road", 22, 1228, 140, 1138, 345, 20],
  ["E", "解放大道", "road", 22, 765, 762, 692, 915, 22],
  ["E", "建设大道", "road", 22, 283, 1080, 390, 950, -42],
  ["E", "怡景花园", "area", 22, 590, 1250, 732, 1250, 0],
  ["E", "武汉市", "city", 43, 440, 1574, 630, 1574, 0],
  ["F", "青山区", "city", 36, 293, 407, 453, 407, 0],
  ["F", "抚顺街", "road", 22, 75, 725, 155, 652, -35],
  ["F", "和平大道", "road", 22, 132, 855, 250, 758, -33],
  ["F", "建港南街", "road", 22, 107, 1010, 222, 903, -35],
  ["F", "三环线", "road", 22, 932, 458, 980, 562, -22],
  ["F", "友谊大道", "road", 22, 808, 912, 945, 912, 0],
  ["F", "杨春湖路", "road", 22, 860, 1078, 897, 1248, -9],
  ["F", "仁和路", "road", 22, 408, 1120, 433, 1232, -10],
  ["F", "欢乐大道", "road", 22, 765, 1408, 903, 1408, 0],
  ["F", "二环线", "road", 22, 35, 1228, 85, 1335, -18],
  ["F", "乐大道", "road", 22, 425, 1560, 512, 1497, -33],
];

const Label = ({ data }) => {
  const [sheet, text, kind, base, x1, y1, x2, y2, rot] = data;
  const size = base * 1.03;
  const a = place(sheet, x1, y1);
  const b = place(sheet, x2, y2);
  const t = (rot * Math.PI) / 180;
  const glyphs = [...text];
  const spots = glyphs.map((_, i) => {
    const k = glyphs.length > 1 ? i / (glyphs.length - 1) : 0;
    const cx = a[0] + (b[0] - a[0]) * k;
    const cy = a[1] + (b[1] - a[1]) * k;
    const dx = -size / 2;
    const dy = size * 0.36;
    return [cx + dx * Math.cos(t) - dy * Math.sin(t), cy + dx * Math.sin(t) + dy * Math.cos(t)];
  });
  return (
    <text
      x={spots.map((s) => s[0].toFixed(1)).join(" ")}
      y={spots.map((s) => s[1].toFixed(1)).join(" ")}
      rotate={rot}
      fontSize={size}
      fontWeight={weight[kind]}
      fill={tone[kind]}
    >
      {text}
    </text>
  );
};

const CityMap = () => (
  <svg width="2184" height="1200" viewBox="1000 293 2184 1200" fill="none" strokeLinecap="round" strokeLinejoin="round">
    <g fill={ink}>
      {Object.entries(water).flatMap(([s, t]) => lines(t).map((l, i) => <polygon key={s + i} points={project(s, l)} />))}
    </g>
    <g fill="#343332">
      {Object.entries(islands).flatMap(([s, t]) => lines(t).map((l, i) => <polygon key={s + i} points={project(s, l)} />))}
    </g>
    <g stroke={ink}>
      {streams.flatMap(([s, w, t], n) => lines(t).map((l, i) => <polyline key={n + "-" + i} strokeWidth={w} points={project(s, l)} />))}
    </g>
    <g stroke="#403f3f" strokeWidth="2">
      {Object.entries(streets).flatMap(([s, t]) => lines(t).map((l, i) => <polyline key={s + i} points={project(s, l)} />))}
    </g>
    <g stroke="#2e2d2d">
      {roads.flatMap(([s, w, t], n) => lines(t).map((l, i) => <polyline key={n + "-" + i} strokeWidth={w + 2.5} points={project(s, l)} />))}
    </g>
    <g stroke="#464646">
      {roads.flatMap(([s, w, t], n) => lines(t).map((l, i) => <polyline key={n + "-" + i} strokeWidth={w - 0.5} points={project(s, l)} />))}
    </g>
    <g fontFamily={`"Noto Sans CJK SC", sans-serif`} stroke="#232323" strokeWidth="3" paintOrder="stroke">
      {labels.map((l, i) => <Label key={i} data={l} />)}
    </g>
    <g stroke="#d9ee57">
      {runs.flatMap(([w, o, t], n) => lines(t).map((l, i) => <polyline key={n + "-" + i} strokeWidth={w} opacity={o} points={project("B", l)} />))}
    </g>
  </svg>
);

const Logo = () => (
  <svg width="128" height="128" viewBox="0 0 128 128">
    <circle cx="64" cy="64" r="64" fill="#fff" />
    <path d="M18 36A54.5 54.5 0 0 1 113 40M117 50A54 54 0 0 1 70 117M49 117A54.5 54.5 0 0 1 11 74M10 73A54 54 0 0 1 16 38" fill="none" stroke="#000" strokeWidth="2" />
    <path d="M40 14A54 54 0 0 1 95 19M114 80A54 54 0 0 1 51 116.5M35 109A54 54 0 0 1 20 95" fill="none" stroke="#000" strokeWidth="2.8" />
    <path d="M86 65C76 60 55 52 52 38C50 28 66 23 74 33C74 20 90 15 96 25C102 37 91 52 86 65Z" fill="#fa0a0f" />
    <path d="M73 33L80 40L82 36L84 39L90 34L91 36L84 42L84 48L82 61L80 61L79 54L78 46L79 42Z" fill="#fff" />
    <g transform="rotate(-20 42 64)">
      <path d="M28 44H55V50H47V78H55V84H28V78H36V50H28Z" fill="#000" stroke="#000" strokeWidth="2.5" strokeLinejoin="round" />
    </g>
    <text x="0" y="0" transform="translate(40 103) rotate(-21.5)" fontFamily={`"Liberation Mono", monospace`} fontSize="17" fontWeight="700" textLength="77" lengthAdjust="spacingAndGlyphs">RUNNING</text>
  </svg>
);

const FullscreenIcon = () => (
  <svg width="58" height="58" viewBox="0 0 29 29" fill="#333">
    <path d="M24 16v5.5c0 1.75-.75 2.5-2.5 2.5H16v-1l3-1.5-4-5.5 1-1 5.5 4 1.5-3h1zM6 16l1.5 3 5.5-4 1 1-4 5.5 3 1.5v1H7.5C5.75 24 5 23.25 5 21.5V16h1zm7-11v1l-3 1.5 4 5.5-1 1-5.5-4L6 13H5V7.5C5 5.75 5.75 5 7.5 5H13zm11 2.5c0-1.75-.75-2.5-2.5-2.5H16v1l3 1.5-4 5.5 1 1 5.5-4 1.5 3h1V7.5z" />
  </svg>
);

const stats = [
  ["2023", "Journey", -1],
  ["23", "Runs", -1],
  ["92.6", "KM", -2.4],
  ["7'14\"", "Avg Pace", -3.6],
  ["8 day", "Streak", -3],
];
const lastYear = [
  ["2022", "Journey", -1],
  ["2", "Runs", -1],
];
const activities = [
  ["2023-04-16 08:46:10", "5.2", "8'19\"", "", "43min", "清晨跑步"],
  ["2023-04-15 07:29:02", "7.0", "8'22\"", "", "58min", "清晨跑步"],
  ["2023-04-14 07:28:12", "3.3", "7'38\"", "", "25min", "清晨跑步"],
];

const StatList = ({ items }) =>
  items.map(([value, name, tracking]) => (
    <Stat key={value}>
      <StatValue $tracking={tracking}>{value}</StatValue>
      <StatName>{name}</StatName>
    </Stat>
  ));

export default function App() {
  return (
    <Window>
      <Global />
      <Header>
        <Logo />
        <BlogLink>Blog</BlogLink>
      </Header>
      <Main>
        <Sidebar>
          <Title>ChenSoul Running</Title>
          <Intro>
            我用 App 记录自己跑步 2 年了，下面列表展示的是 2023
            <br />
            的数据
          </Intro>
          <Rule $top={65} />
          <StatList items={stats} />
          <Rule $top={71} />
          <StatList items={lastYear} />
        </Sidebar>
        <Content>
          <MapFrame>
            <CityMap />
            <YearNav>
              <Year $active>2023</Year>
              <Year>2022</Year>
              <Year>Total</Year>
            </YearNav>
            <FullscreenButton aria-label="Fullscreen">
              <FullscreenIcon />
            </FullscreenButton>
            <MapboxLogo>
              <svg width="170" height="44" viewBox="0 0 170 44">
                <circle cx="18" cy="22" r="18" fill="#f4f4f4" />
                <path d="M10 31C7 18 14 11 21 12C30 13 31 24 25 28C21 31 15 31 10 31Z" fill="#343332" />
                <path d="M20 14L22 19L27 21L22 23L20 28L18 23L13 21L18 19Z" fill="#f4f4f4" />
                <text x="44" y="31" fill="#f4f4f4" fontFamily="Inter, sans-serif" fontSize="32" fontWeight="600" textLength="123" lengthAdjust="spacingAndGlyphs">mapbox</text>
              </svg>
            </MapboxLogo>
            <Attribution>
              <span>© Mapbox</span>
              <span>© OpenStreetMap</span>
              <b>Improve this map</b>
            </Attribution>
          </MapFrame>
          <Table>
            <Row>
              {["Date", "KM", "Pace", "BPM", "Time", ""].map((h, i) => (
                <Cell key={i} $muted $head>{h}</Cell>
              ))}
            </Row>
            {activities.map((r) => (
              <Row key={r[0]}>
                {r.map((c, i) => (
                  <Cell key={i} $left={i === 0} $muted={i === 0}>{c}</Cell>
                ))}
              </Row>
            ))}
          </Table>
        </Content>
      </Main>
    </Window>
  );
}
